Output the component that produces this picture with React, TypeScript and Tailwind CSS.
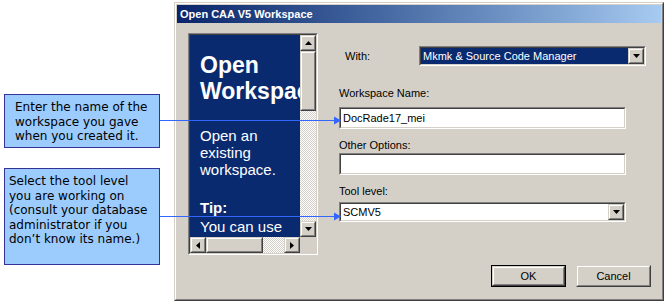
import type { ReactNode } from "react";

const dither =
  "bg-[repeating-conic-gradient(#d4d0c8_0%_25%,#ffffff_0%_50%)] bg-[length:2px_2px]";

const Raised = ({ className = "", children }: { className?: string; children?: ReactNode }) => (
  <div
    className={`border border-t-[#d4d0c8] border-l-[#d4d0c8] border-r-[#404040] border-b-[#404040] ${className}`}
  >
    <div className="h-full w-full border border-t-white border-l-white border-r-[#808080] border-b-[#808080] bg-[#d4d0c8] flex items-center justify-center">
      {children}
    </div>
  </div>
);

const Sunken = ({ className = "", children }: { className?: string; children?: ReactNode }) => (
  <div
    className={`border border-t-[#808080] border-l-[#808080] border-r-white border-b-white ${className}`}
  >
    <div className="h-full w-full border border-t-[#404040] border-l-[#404040] border-r-[#d4d0c8] border-b-[#d4d0c8] bg-white flex">
      {children}
    </div>
  </div>
);

type Dir = "up" | "down" | "left" | "right";

const Arrow = ({ dir }: { dir: Dir }) => {
  const pts: Record<Dir, string> = {
    up: "3.5,0 7,4 0,4",
    down: "0,0 7,0 3.5,4",
    left: "4,0 4,7 0,3.5",
    right: "0,0 4,3.5 0,7",
  };
  const vertical = dir === "up" || dir === "down";
  return (
    <svg width={vertical ? 7 : 4} height={vertical ? 4 : 7} aria-hidden="true">
      <polygon points={pts[dir]} fill="#000" />
    </svg>
  );
};

const Callouts = () => (
  <div className="w-[174px] shrink-0 pt-[94px] pl-[4px] font-['DejaVu_Sans',sans-serif] text-[12px] leading-[14.5px] text-black">
    <div className="w-[156px] h-[54px] border border-[#333399] bg-[#9ccbfd] pl-[10px] pt-[5px]">
      Enter the name of the
      <br />
      workspace you gave
      <br />
      when you created it.
    </div>
    <div className="mt-[20px] w-[156px] h-[97px] border border-[#333399] bg-[#9ccbfd] pl-[4px] pt-[5px]">
      Select the tool level
      <br />
      you are working on
      <br />
      (consult your database
      <br />
      administrator if you
      <br />
      don’t know its name.)
    </div>
  </div>
);

const Banner = () => (
  <Sunken className="ml-[11px] mt-[10px] w-[130px] h-[222px] shrink-0">
    <div className="grid grid-cols-[110px_16px] grid-rows-[202px_16px] w-full h-full">
      <div className="bg-[#0a2a70] text-white overflow-hidden pl-[10px] pt-[17px] font-['Liberation_Sans',sans-serif] whitespace-nowrap">
        <div className="text-[23px] leading-[26px] font-bold">
          Open
          <br />
          Workspace
        </div>
        <div className="mt-[23px] text-[15px] leading-[17px]">
          Open an
          <br />
          existing
          <br />
          workspace.
        </div>
        <div className="mt-[20px] text-[15px] leading-[19px]">
          <span className="font-bold">Tip:</span>
          <br />
          You can use
        </div>
      </div>
      <div className={`flex flex-col ${dither}`}>
        <Raised className="h-[16px] w-[16px]">
          <Arrow dir="up" />
        </Raised>
        <Raised className="h-[60px] w-[16px]" />
        <div className="flex-1" />
        <Raised className="h-[16px] w-[16px]">
          <Arrow dir="down" />
        </Raised>
      </div>
      <div className={`flex ${dither}`}>
        <Raised className="h-[16px] w-[16px]">
          <Arrow dir="left" />
        </Raised>
        <Raised className="h-[16px] w-[57px]" />
        <div className="flex-1" />
        <Raised className="h-[16px] w-[16px]">
          <Arrow dir="right" />
        </Raised>
      </div>
      <div className="bg-[#d4d0c8]" />
    </div>
  </Sunken>
);

const Form = () => (
  <div className="ml-[21px] w-[312px] flex flex-col text-[11px] leading-[13px] text-black font-['Liberation_Sans',sans-serif]">
    <div className="mt-[23px] h-[20px] flex items-center">
      <span className="pl-[6px] w-[80px]">With:</span>
      <Sunken className="w-[227px] h-[20px]">
        <div className="flex-1 bg-[#0a2a70] text-white pl-[2px] flex items-center">
          Mkmk &amp; Source Code Manager
        </div>
        <Raised className="w-[16px] h-[16px]">
          <Arrow dir="down" />
        </Raised>
      </Sunken>
    </div>
    <div className="mt-[21px]">Workspace Name:</div>
    <Sunken className="mt-[7px] w-[287px] h-[22px]">
      <div className="pl-[2px] flex items-center">DocRade17_mei</div>
    </Sunken>
    <div className="mt-[10px]">Other Options:</div>
    <Sunken className="mt-[1px] w-[287px] h-[22px]" />
    <div className="mt-[10px]">Tool level:</div>
    <Sunken className="mt-[4px] w-[287px] h-[20px]">
      <div className="flex-1 pl-[2px] flex items-center">SCMV5</div>
      <Raised className="w-[16px] h-[16px]">
        <Arrow dir="down" />
      </Raised>
    </Sunken>
    <div className="mt-[43px] flex justify-end gap-[10px]">
      <div className="w-[75px] h-[22px] border border-black">
        <Raised className="w-full h-full">OK</Raised>
      </div>
      <Raised className="w-[75px] h-[22px]">Cancel</Raised>
    </div>
  </div>
);

const Dialog = () => (
  <div className="mt-[2px] w-[490px] h-[299px] border border-t-[#d4d0c8] border-l-[#d4d0c8] border-r-[#404040] border-b-[#404040]">
    <div className="w-full h-full border border-t-white border-l-white border-r-[#808080] border-b-[#808080] bg-[#d4d0c8] p-px flex flex-col">
      <div className="h-[18px] shrink-0 bg-gradient-to-r from-[#0a246a] to-[#a6caf0] flex items-center pl-[3px] text-white font-bold text-[11px] font-['Liberation_Sans',sans-serif]">
        Open CAA V5 Workspace
      </div>
      <div className="flex flex-1">
        <Banner />
        <Form />
      </div>
    </div>
  </div>
);

export default function App() {
  return (
    <div className="relative w-[664px] h-[301px] bg-white flex overflow-hidden">
      <Callouts />
      <Dialog />
      <svg className="absolute inset-0 pointer-events-none" width={664} height={301} aria-hidden="true">
        <line x1={160} y1={120.5} x2={336} y2={120.5} stroke="#3366ff" strokeWidth={1} />
        <polygon points="334,116.5 341,120.5 334,124.5" fill="#3366ff" />
        <line x1={160} y1={216.5} x2={336} y2={216.5} stroke="#3366ff" strokeWidth={1} />
        <polygon points="334,212.5 341,216.5 334,220.5" fill="#3366ff" />
      </svg>
    </div>
  );
}
